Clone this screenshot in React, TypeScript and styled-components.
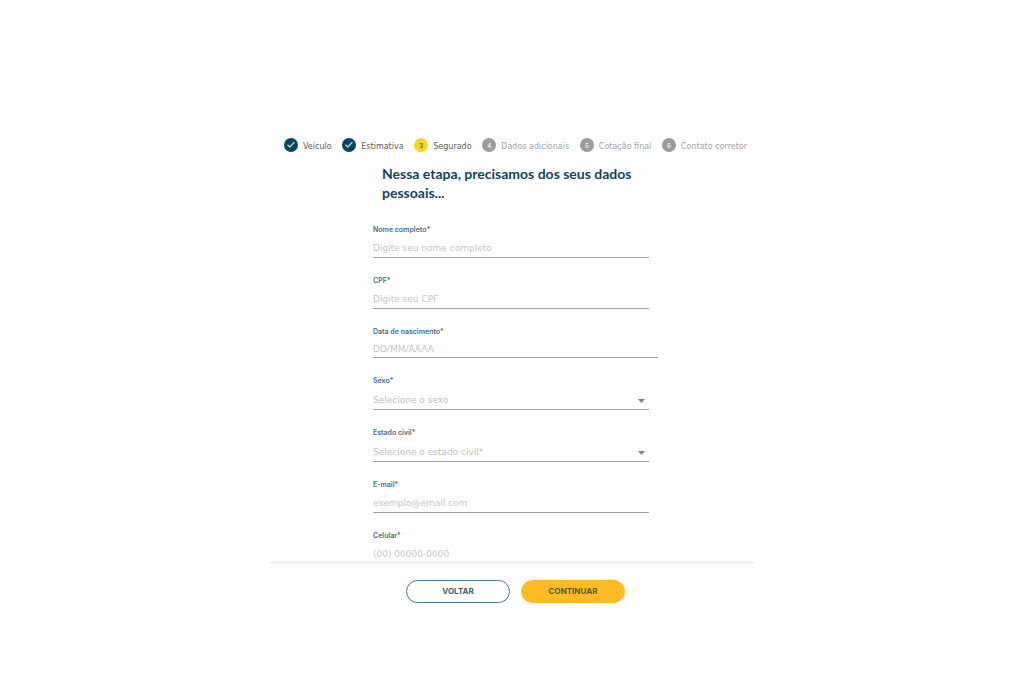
import React from 'react';
import styled, { createGlobalStyle, css } from 'styled-components';

const GlobalStyle = createGlobalStyle`
  * { box-sizing: border-box; }
  body { margin: 0; background: #fefefe; font-family: Inter, sans-serif; }
`;

const Page = styled.main`
  display: flex;
  flex-direction: column;
  width: 100%;
  max-width: 484px;
  height: 100vh;
  min-height: 400px;
  margin: 0 auto;
  padding: 138px 0 80px;
`;

const Stepper = styled.ol`
  display: flex;
  justify-content: space-between;
  margin: 0;
  padding: 0 7px 0 14px;
  list-style: none;
`;

type StepState = 'done' | 'current' | 'todo';

const Step = styled.li<{ $state: StepState }>`
  display: flex;
  align-items: flex-start;
  gap: 5px;
  height: 15px;
  font-family: "DejaVu Sans", sans-serif;
  font-size: 8px;
  line-height: 17px;
  white-space: nowrap;
  color: ${(p) => (p.$state === 'todo' ? '#a3a3a3' : '#5c5c5c')};
`;

const badgeColor = { done: '#05475d', current: '#fcd51c', todo: '#9c9c9c' };

const Badge = styled.span<{ $state: StepState }>`
  display: flex;
  align-items: center;
  justify-content: center;
  width: 14px;
  height: 14px;
  border-radius: 50%;
  background: ${(p) => badgeColor[p.$state]};
  color: ${(p) => (p.$state === 'current' ? '#5b5232' : '#f0f0f0')};
  font-family: Inter, sans-serif;
  font-size: 6px;
  font-weight: 600;
`;

const Title = styled.h1`
  margin: 11px 103px 0 112px;
  color: #16425f;
  font: 700 14px/19px Lato, sans-serif;
`;

const Fields = styled.form`
  display: flex;
  flex: 1;
  flex-direction: column;
  gap: 17px;
  min-height: 0;
  margin-top: 22px;
  padding: 0 105px 0 103px;
  overflow: hidden auto;
  scrollbar-width: none;
`;

const Field = styled.div<{ $wide?: boolean }>`
  display: flex;
  flex: none;
  flex-direction: column;
  gap: 4px;
  margin-right: ${(p) => (p.$wide ? '-9px' : '0')};
`;

const Label = styled.label`
  color: #4a6c84;
  font-size: 7px;
  font-weight: 600;
  line-height: 12px;
`;

const control = css`
  width: 100%;
  margin: 0;
  padding: 0 0 1px;
  border: 0;
  border-bottom: 1px solid #a0a0a0;
  border-radius: 0;
  outline: 0;
  background: transparent;
  color: #bebebe;
  font-family: "DejaVu Sans", sans-serif;
  font-size: 9px;
`;

const Input = styled.input<{ $short?: boolean }>`
  ${control}
  height: ${(p) => (p.$short ? '16px' : '18px')};
  &::placeholder { color: #c6c6c6; opacity: 1; }
`;

const SelectBox = styled.div`
  display: grid;
  align-items: center;
  > * { grid-area: 1 / 1; }
`;

const Select = styled.select`
  ${control}
  height: 19px;
  appearance: none;
`;

const Arrow = styled.svg`
  justify-self: end;
  width: 7px;
  height: 4px;
  margin-right: 4px;
  pointer-events: none;
`;

const Footer = styled.footer`
  display: flex;
  justify-content: center;
  gap: 11px;
  padding: 17px 0 0 7px;
  border-top: 1px solid #e8e8e8;
`;

const Button = styled.button<{ $primary?: boolean }>`
  width: 104px;
  height: 23px;
  padding: 0 0 1px;
  border: 1px solid ${(p) => (p.$primary ? '#ffba24' : '#43798a')};
  border-radius: 12px;
  background: ${(p) => (p.$primary ? '#ffba24' : '#ffffff')};
  color: ${(p) => (p.$primary ? '#5b5530' : '#3d6176')};
  font-family: inherit;
  font-size: 8px;
  font-weight: 700;
  cursor: pointer;
`;

const steps: { label: string; state: StepState }[] = [
  { label: 'Veículo', state: 'done' },
  { label: 'Estimativa', state: 'done' },
  { label: 'Segurado', state: 'current' },
  { label: 'Dados adicionais', state: 'todo' },
  { label: 'Cotação final', state: 'todo' },
  { label: 'Contato corretor', state: 'todo' },
];

type FieldData = {
  id: string;
  label: string;
  hint: string;
  kind?: 'date' | 'select';
};

const fields: FieldData[] = [
  { id: 'nome', label: 'Nome completo*', hint: 'Digite seu nome completo' },
  { id: 'cpf', label: 'CPF*', hint: 'Digite seu CPF' },
  { id: 'nascimento', label: 'Data de nascimento*', hint: 'DD/MM/AAAA', kind: 'date' },
  { id: 'sexo', label: 'Sexo*', hint: 'Selecione o sexo', kind: 'select' },
  { id: 'civil', label: 'Estado civil*', hint: 'Selecione o estado civil*', kind: 'select' },
  { id: 'email', label: 'E-mail*', hint: 'exemplo@email.com' },
  { id: 'celular', label: 'Celular*', hint: '(00) 00000-0000' },
];

export default function App() {
  return (
    <>
      <GlobalStyle />
      <Page>
        <Stepper>
          {steps.map((s, i) => (
            <Step key={s.label} $state={s.state}>
              <Badge $state={s.state}>
                {s.state === 'done' ? (
                  <svg width="10" height="10" viewBox="0 0 10 10" fill="none" stroke="#d5e3e8" strokeWidth="1.2">
                    <path d="M1.5 4.8 3.8 7 8.5 2.2" />
                  </svg>
                ) : (
                  i + 1
                )}
              </Badge>
              {s.label}
            </Step>
          ))}
        </Stepper>
        <Title>Nessa etapa, precisamos dos seus dados pessoais...</Title>
        <Fields id="dados">
          {fields.map((f) => (
            <Field key={f.id} $wide={f.kind === 'date'}>
              <Label htmlFor={f.id}>{f.label}</Label>
              {f.kind === 'select' ? (
                <SelectBox>
                  <Select id={f.id}>
                    <option>{f.hint}</option>
                  </Select>
                  <Arrow viewBox="0 0 7 4">
                    <path d="M0 0h7L3.5 4z" fill="#808080" />
                  </Arrow>
                </SelectBox>
              ) : (
                <Input id={f.id} placeholder={f.hint} $short={f.kind === 'date'} />
              )}
            </Field>
          ))}
        </Fields>
        <Footer>
          <Button type="button">VOLTAR</Button>
          <Button type="submit" form="dados" $primary>CONTINUAR</Button>
        </Footer>
      </Page>
    </>
  );
}
